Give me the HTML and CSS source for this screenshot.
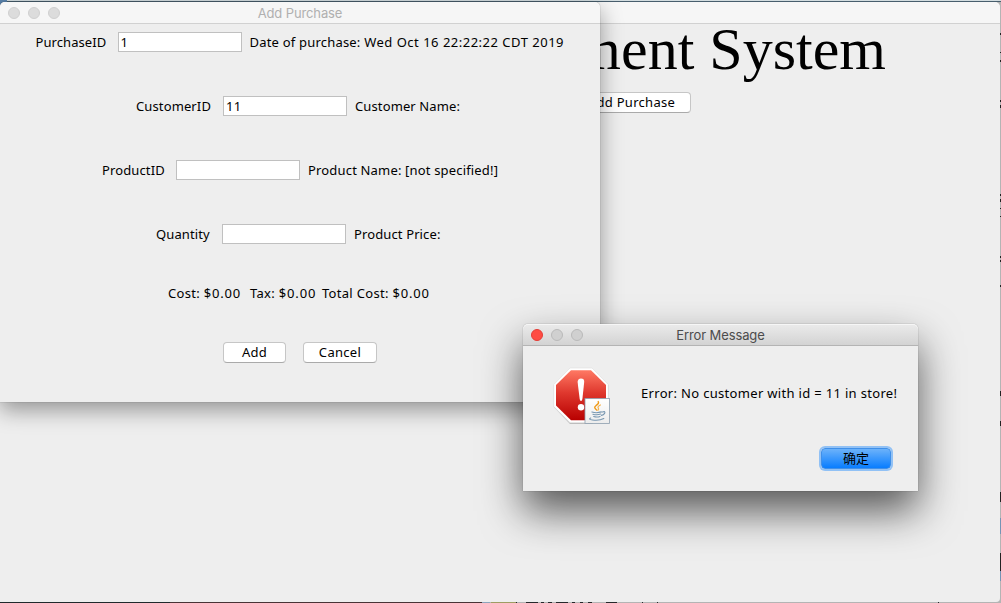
FILE: index.html
```
<!DOCTYPE html>
<html lang="en">
<head>
<meta charset="utf-8">
<title>Add Purchase</title>
<link rel="stylesheet" href="styles.css">
</head>
<body>
<div class="desktop">
  <svg class="backdrop" width="1001" height="603" viewBox="0 0 1001 603" shape-rendering="crispEdges">
    <rect width="1001" height="603" fill="#b4b4b4"/>
    <rect width="1001" height="1" fill="#d3dde0"/>
    <rect y="1" width="1001" height="1" fill="#485e6d"/>
    <rect width="7" height="8" fill="#5a82aa"/>
    <path d="M1000 33h1v2h-1zM1000 52h1v1h-1zM1000 60h1v2h-1zM1000 100h1v2h-1zM1000 105h1v3h-1zM1000 194h1v2h-1zM1000 199h1v3h-1zM1000 208h1v1h-1zM1000 216h1v1h-1zM1000 256h1v2h-1zM1000 260h1v2h-1zM1000 285h1v2h-1zM1000 391h1v5h-1zM1000 421h1v5h-1zM1000 492h1v10h-1zM1000 553h1v18h-1z" fill="#222"/>
    <path d="M1000 518h1v16h-1zM1000 571h1v10h-1z" fill="#7594b5"/>
    <rect y="602" width="170" height="1" fill="#202a2c"/>
    <rect x="170" y="602" width="312" height="1" fill="#483336"/>
    <rect x="482" y="602" width="8" height="1" fill="#8ca5bc"/>
    <rect x="491" y="602" width="25" height="1" fill="#9e9d63"/>
    <path d="M516 602h1v1h-1zM526 602h12v1h-12zM541 602h3v1h-3zM548 602h4v1h-4zM556 602h12v1h-12zM572 602h3v1h-3zM580 602h3v1h-3zM588 602h4v1h-4zM606 602h11v1h-11zM642 602h1v1h-1zM657 602h1v1h-1zM938 602h1v1h-1z" fill="#26282b"/>
  </svg>

  <section class="window main-window">
    <header class="titlebar"></header>
    <h1 class="heading">ment System</h1>
    <div class="main-actions"><button class="button main-button">Add Purchase</button></div>
  </section>

  <section class="window purchase-window">
    <header class="titlebar">
      <span class="lights"><i></i><i></i><i></i></span>
      <span class="title">Add Purchase</span>
    </header>
    <form class="form">
      <div class="row"><label class="label w-purchase">PurchaseID</label><span class="field">1</span><span class="info w-date">Date of purchase: <span class="date">Wed Oct 16 22:22:22 CDT 2019</span></span></div>
      <div class="row"><label class="label w-customer">CustomerID</label><span class="field">11</span><span class="info w-customer-name">Customer Name:</span></div>
      <div class="row"><label class="label w-product">ProductID</label><span class="field"></span><span class="info w-product-name">Product Name: [not specified!]</span></div>
      <div class="row"><label class="label w-quantity">Quantity</label><span class="field"></span><span class="info w-price">Product Price:</span></div>
      <div class="totals"><span class="w-cost">Cost: <span class="amount">$0.00</span></span><span class="w-tax">Tax: <span class="amount">$0.00</span></span><span class="w-total">Total Cost: <span class="amount">$0.00</span></span></div>
      <div class="buttons"><button type="button" class="button add">Add</button><button type="button" class="button cancel">Cancel</button></div>
    </form>
  </section>

  <section class="window error-window">
    <header class="titlebar active">
      <span class="lights"><i class="close"></i><i></i><i></i></span>
      <span class="title">Error Message</span>
    </header>
    <div class="message">
      <svg class="error-icon" width="60" height="60" viewBox="0 0 60 60">
        <defs>
          <linearGradient id="red" x2="0" y2="1"><stop offset="0" stop-color="#ff7964"/><stop offset=".45" stop-color="#df382e"/><stop offset="1" stop-color="#b80000"/></linearGradient>
          <linearGradient id="paper" x2="0" y2="1"><stop offset="0" stop-color="#fff"/><stop offset="1" stop-color="#ececec"/></linearGradient>
        </defs>
        <path d="M18 2H40L56.5 18V40L40 57H18L1.8 40V18Z" fill="#777" opacity=".45"/>
        <path d="M18 1H40L56.3 17.5V39.5L40 55.7H18L1.7 39.5V17.5Z" fill="#fff" stroke="#ddd" stroke-width=".6"/>
        <path d="M19 3.2H39L54 18V38.5L39 53.3H19L4 38.5V18Z" fill="url(#red)"/>
        <path d="M25.6 15Q26 11.6 29 11.6Q32.4 11.6 32.2 15L30.4 32Q30.1 34 29 34Q28 34 27.7 32Z" fill="#fff"/>
        <circle cx="29" cy="40.2" r="3.2" fill="#fff"/>
        <rect x="33" y="31.5" width="24.5" height="25" fill="url(#paper)" stroke="#8d9eae" stroke-width=".8"/>
        <g fill="none" stroke-linecap="round" transform="translate(-.6 -1)">
          <path d="M46.8 35.5Q48 37.5 44.5 39.7Q41.8 41.6 45.2 44" stroke="#f09a18" stroke-width="1.4"/>
          <path d="M49 39Q45.5 40.8 47 42.2Q47.8 43.2 46.5 44.3" stroke="#f5b24b" stroke-width="1.2"/>
          <path d="M40.5 46Q45 47.4 50 45.9M41.5 48.2Q45.5 49.3 49.3 48.1M42.3 50.5Q45.5 51.6 48.6 50.4M51 46Q54.4 44.8 53.2 47.4Q52.2 49 50 49.4M39.3 52Q36.5 53.5 41 54Q48 55 52.4 52.6" stroke="#7897b1" stroke-width="1.1"/>
        </g>
      </svg>
      <p class="message-text">Error: No customer with id = 11 in store!</p>
    </div>
    <div class="message-actions"><button class="ok">确定</button></div>
  </section>
</div>
</body>
</html>
```
FILE: styles.css
```
* { box-sizing: border-box; }
body { margin: 0; font: 13px/20px "Noto Sans", "Noto Sans CJK SC", sans-serif; color: #000; overflow: hidden; }
button { font: inherit; color: inherit; padding: 0; }
.desktop { position: relative; width: 1001px; height: 603px; overflow: hidden; }
.backdrop { position: absolute; left: 0; top: 0; }
.window { position: absolute; display: flex; flex-direction: column; background: #eee; white-space: nowrap; }
.main-window { left: 0; top: 2px; width: 1000px; height: 600px; border-radius: 5px 5px 4px 0; overflow: hidden; }
.titlebar { position: relative; flex: none; height: 22px; background: #f6f6f6; border-bottom: 1px solid #d1d1d1; border-radius: 5px 5px 0 0; display: flex; justify-content: center; align-items: center; }
.title { font: 13px/20px Inter, sans-serif; letter-spacing: -.12px; color: #b0b0b0; }
.lights { position: absolute; left: 8px; top: 5px; display: flex; gap: 8px; }
.lights i { width: 12px; height: 12px; border-radius: 50%; background: #dcdcdc; border: 1px solid #d0d0d0; }
.heading { margin: -8px 0 0; padding-right: 114px; text-align: right; font: 400 60px/66px "Liberation Serif", serif; height: 66px; }
.main-actions { display: flex; justify-content: flex-end; padding-right: 309px; margin-top: 10px; }
.button { height: 21px; background: #fff; border: 1px solid #c6c6c6; border-bottom-color: #aaa; border-radius: 4px; line-height: 19px; display: block; }
.main-button { width: 122px; padding-left: 3px; letter-spacing: .3px; }

.purchase-window { left: 0; top: 2px; width: 600px; height: 400px; border-radius: 5px 5px 0 0; box-shadow: 0 0 1px rgba(0,0,0,.55), 0 8px 22px rgba(0,0,0,.38); }
.form { display: flex; flex-direction: column; padding-top: 8px; }
.row { display: flex; justify-content: center; height: 20px; margin-bottom: 44px; letter-spacing: .12px; }
.label { margin-right: 12px; }
.field { width: 124px; height: 20px; border: 1px solid #c0c0c0; background: #fff; padding-left: 2px; line-height: 18px; margin-right: 8px; letter-spacing: .3px; }
.w-purchase { width: 70px; letter-spacing: .08px; }
.w-date { width: 315px; letter-spacing: .2px; }
.date { letter-spacing: .5px; }
.w-customer { width: 75px; }
.w-customer-name { width: 109px; }
.w-product { width: 62px; }
.w-product-name { width: 190px; letter-spacing: .17px; }
.w-quantity { width: 54px; }
.w-price { width: 90px; }
.totals { display: flex; justify-content: center; height: 20px; margin-top: -5px; letter-spacing: .3px; }
.amount { letter-spacing: .85px; }
.w-cost { width: 82px; }
.w-tax { width: 72px; }
.w-total { width: 110px; }
.buttons { display: flex; justify-content: center; gap: 17px; margin-top: 39px; }
.buttons .button { letter-spacing: .3px; }
.add { width: 63px; }
.cancel { width: 74px; }

.error-window { left: 523px; top: 324px; width: 395px; height: 167px; border-radius: 5px 5px 0 0; box-shadow: 0 0 1px rgba(0,0,0,.6), 0 20px 42px rgba(0,0,0,.64); }
.active { background: linear-gradient(#ebebeb, #d3d3d3); border-color: #b4b4b4; box-shadow: inset 0 1px #f6f6f6; }
.active .title { color: #4c4c4c; }
.active i { background: #d0d0d0; border-color: #bababa; }
.active i.close { background: #ff4c43; border-color: #e43d36; }
.message { display: flex; padding: 21px 0 0 29px; height: 99px; }
.error-icon { flex: none; margin-right: 29px; }
.message-text { margin: 16px 0 0; letter-spacing: .32px; }
.message-actions { display: flex; justify-content: flex-end; padding-right: 27px; margin-top: 3px; }
.ok { width: 70px; height: 21px; border: 1px solid #4090e9; border-radius: 4px; background: linear-gradient(#6cb2fa, #087dff); box-shadow: 0 0 0 2px #91c1f5; font: 13px/17px "Noto Sans CJK SC", sans-serif; padding-bottom: 2px; }
```
